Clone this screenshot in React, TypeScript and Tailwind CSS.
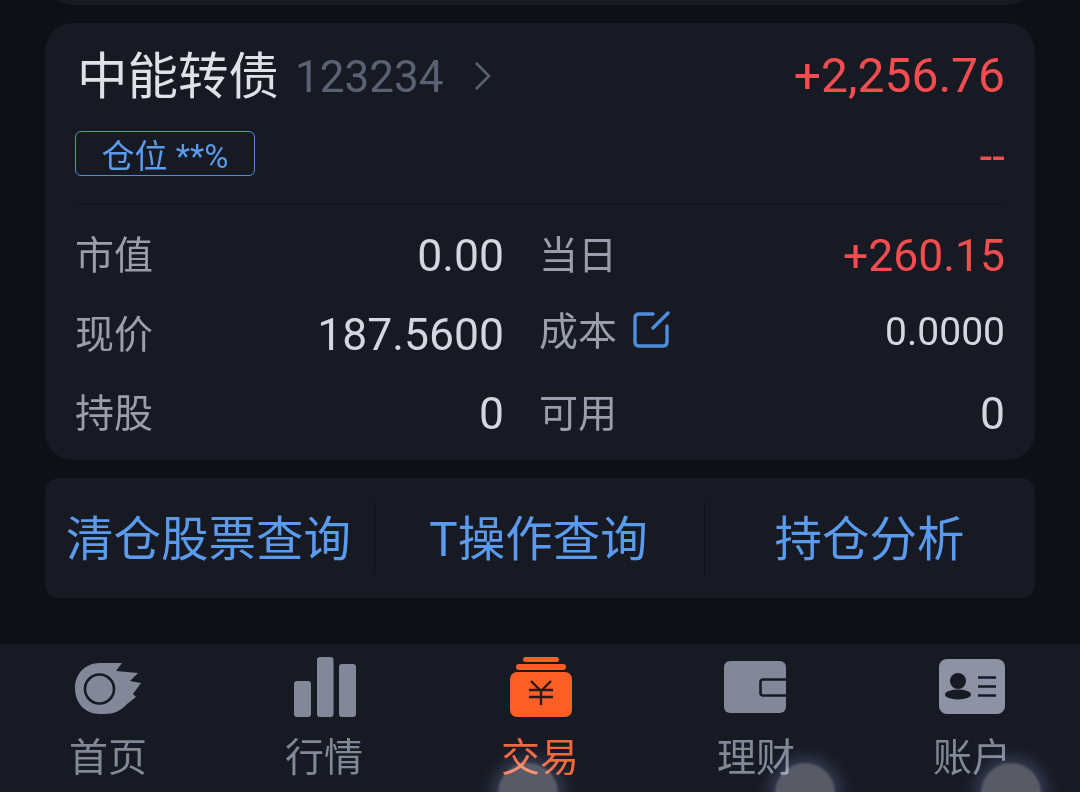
import type { ReactNode } from "react";

const font = "font-['Roboto','Noto_Sans_CJK_SC',sans-serif]";

function HomeIcon() {
  return (
    <svg className="mb-[3px]" width="66" height="51" viewBox="0 0 66 51" fill="none">
      <path
        d="M25 0H47L41 8L63 10L55 18L66 20L58 31L61 34L52 41C46 48 38 51 30 51H25C10 51 0 40 0 25C0 11 10 0 25 0Z"
        fill="#828898"
      />
      <circle cx="24.5" cy="26" r="14.5" stroke="#171a23" strokeWidth="2.6" />
    </svg>
  );
}

function MarketIcon() {
  return (
    <svg className="ml-[2px]" width="62" height="60" viewBox="0 0 62 60" fill="#828898">
      <rect x="0" y="24" width="17" height="36" rx="3" />
      <rect x="23" y="0" width="16.5" height="60" rx="3" />
      <rect x="45" y="7" width="17" height="53" rx="3" />
    </svg>
  );
}

function TradeIcon() {
  return (
    <svg className="ml-[2px]" width="62" height="60" viewBox="0 0 62 60" fill="none">
      <rect x="13" y="0" width="36" height="5" rx="2.5" fill="#fb5f26" />
      <rect x="6" y="7" width="50" height="6" rx="3" fill="#fb5f26" />
      <rect x="0" y="15" width="62" height="45" rx="7" fill="#fb5f26" />
      <path d="M21 24L31 34L41 24M19 33H43M19 40H43M31 34V48" stroke="#2a1a18" strokeWidth="2.4" />
    </svg>
  );
}

function WalletIcon() {
  return (
    <svg className="mb-[4px] mr-[2px]" width="62" height="52" viewBox="0 0 62 52" fill="none">
      <rect width="62" height="52" rx="6" fill="#828898" />
      <path d="M62 18.5H39C37.5 18.5 36.5 19.5 36.5 21V32C36.5 33.5 37.5 34.5 39 34.5H62" stroke="#171a23" strokeWidth="2.6" />
    </svg>
  );
}

function AccountIcon() {
  return (
    <svg className="mb-[3px]" width="66" height="55" viewBox="0 0 66 55" fill="none">
      <rect width="66" height="55" rx="8" fill="#8d92a4" />
      <circle cx="19" cy="22" r="8" fill="#171a23" />
      <ellipse cx="19" cy="35.5" rx="13" ry="5" fill="#171a23" />
      <path d="M39 18.5H57M39 27.5H57M39 36.5H57" stroke="#171a23" strokeWidth="2.5" />
    </svg>
  );
}

function EditIcon() {
  return (
    <svg className="mb-[4px]" width="38" height="38" viewBox="0 0 38 38" fill="none" stroke="#4f8ede" strokeWidth="3.4" strokeLinecap="round">
      <path d="M20 3H6C3.5 3 2 4.5 2 7V31C2 33.5 3.5 35 6 35H30C32.5 35 34 33.5 34 31V15" />
      <path d="M20 17L35 2" />
    </svg>
  );
}

function Row({ label, value, red, small }: { label: ReactNode; value: string; red?: boolean; small?: boolean }) {
  return (
    <div className="flex h-[44px] items-center justify-between">
      <span className="text-[39px] leading-none text-[#9a9dab]">{label}</span>
      <span
        className={`leading-none ${small ? "-translate-y-[3px] text-[39px]" : "text-[44.5px]"} ${
          red ? "text-[#f54d4f]" : "text-[#d5d7de]"
        }`}
      >
        {value}
      </span>
    </div>
  );
}

const tabs = [
  { label: "首页", icon: <HomeIcon />, active: false },
  { label: "行情", icon: <MarketIcon />, active: false },
  { label: "交易", icon: <TradeIcon />, active: true },
  { label: "理财", icon: <WalletIcon />, active: false },
  { label: "账户", icon: <AccountIcon />, active: false },
];

export default function App() {
  return (
    <div className={`relative h-[792px] w-[1080px] overflow-hidden bg-[#0d1014] ${font}`}>
      {/* previous card, only its bottom edge is on screen */}
      <div className="mx-[45px] -mt-[30px] h-[35px] rounded-b-[28px] bg-[#171a23]" />

      {/* position card */}
      <div className="mx-[45px] mt-[18px] h-[437px] rounded-[28px] bg-[#171a23] px-[30px]">
        <div className="flex items-center justify-between pl-[2px] pt-[24px]">
          <div className="flex items-center">
            <span className="translate-y-[1px] text-[50.5px] leading-[58px] text-[#dfe1e7]">中能转债</span>
            <span className="ml-[16px] translate-y-[1px] text-[44px] leading-[58px] text-[#5b6072]">123234</span>
            <svg className="ml-[30px]" width="20" height="30" viewBox="0 0 20 30" fill="none" stroke="#5b6072" strokeWidth="2.6">
              <path d="M3 2L16 15L3 28" />
            </svg>
          </div>
          <span className="text-[48px] leading-[58px] text-[#f54d4f]">+2,256.76</span>
        </div>

        <div className="mt-[26px] flex h-[45px] items-center justify-between">
          <div className="flex h-[45px] w-[180px] items-center justify-center rounded-[6px] border border-[#4f8ede] pt-[5px] text-[33px] leading-none text-[#5a9bee]">
            仓位 **%
          </div>
          <span className="translate-y-[2px] text-[46px] leading-none text-[#f54d4f]">--</span>
        </div>

        <div className="mt-[27px] h-px bg-[#0e1116]" />

        <div className="mt-[30px] grid grid-cols-[429px_466px] gap-x-[35px] gap-y-[35px]">
          <Row label="市值" value="0.00" />
          <Row label="当日" value="+260.15" red />
          <Row label="现价" value="187.5600" />
          <Row
            label={
              <span className="flex -translate-y-[3px] items-center gap-[16px]">
                成本
                <EditIcon />
              </span>
            }
            value="0.0000"
            small
          />
          <Row label="持股" value="0" />
          <Row label="可用" value="0" />
        </div>
      </div>

      {/* shortcuts */}
      <div className="mx-[45px] mt-[18px] flex h-[120px] items-center rounded-[14px] bg-[#171a23] text-[47.5px] leading-none text-[#5a9bee]">
        <div className="flex h-[72px] w-[330px] items-center justify-center border-r border-[#0e1116] pr-[2px] pt-[5px]">清仓股票查询</div>
        <div className="flex h-[72px] w-[330px] items-center justify-center border-r border-[#0e1116] pr-[2px] pt-[5px]">T操作查询</div>
        <div className="flex h-[72px] w-[330px] items-center justify-center pr-[1px] pt-[5px]">持仓分析</div>
      </div>

      {/* bottom nav */}
      <div className="absolute inset-x-0 bottom-0 flex h-[148px] bg-[#171a23]">
        {tabs.map((t) => (
          <div key={t.label} className="flex flex-1 flex-col items-center">
            <div className="flex h-[73px] items-end">{t.icon}</div>
            <span className={`mt-[22px] text-[39px] leading-none ${t.active ? "text-[#f2683a]" : "text-[#828898]"}`}>
              {t.label}
            </span>
          </div>
        ))}
      </div>

      {/* touch marks over the nav */}
      <div className="absolute left-[498px] top-[763px] h-[60px] w-[60px] rounded-full bg-[#47484e] shadow-[0_0_16px_6px_rgba(90,95,140,0.4)] mix-blend-screen blur-[1px]" />
      <div className="absolute left-[775px] top-[763px] h-[60px] w-[60px] rounded-full bg-[#47484e] shadow-[0_0_16px_6px_rgba(90,95,140,0.4)] mix-blend-screen blur-[1px]" />
      <div className="absolute left-[981px] top-[763px] h-[60px] w-[60px] rounded-full bg-[#47484e] shadow-[0_0_16px_6px_rgba(90,95,140,0.4)] mix-blend-screen blur-[1px]" />
    </div>
  );
}
